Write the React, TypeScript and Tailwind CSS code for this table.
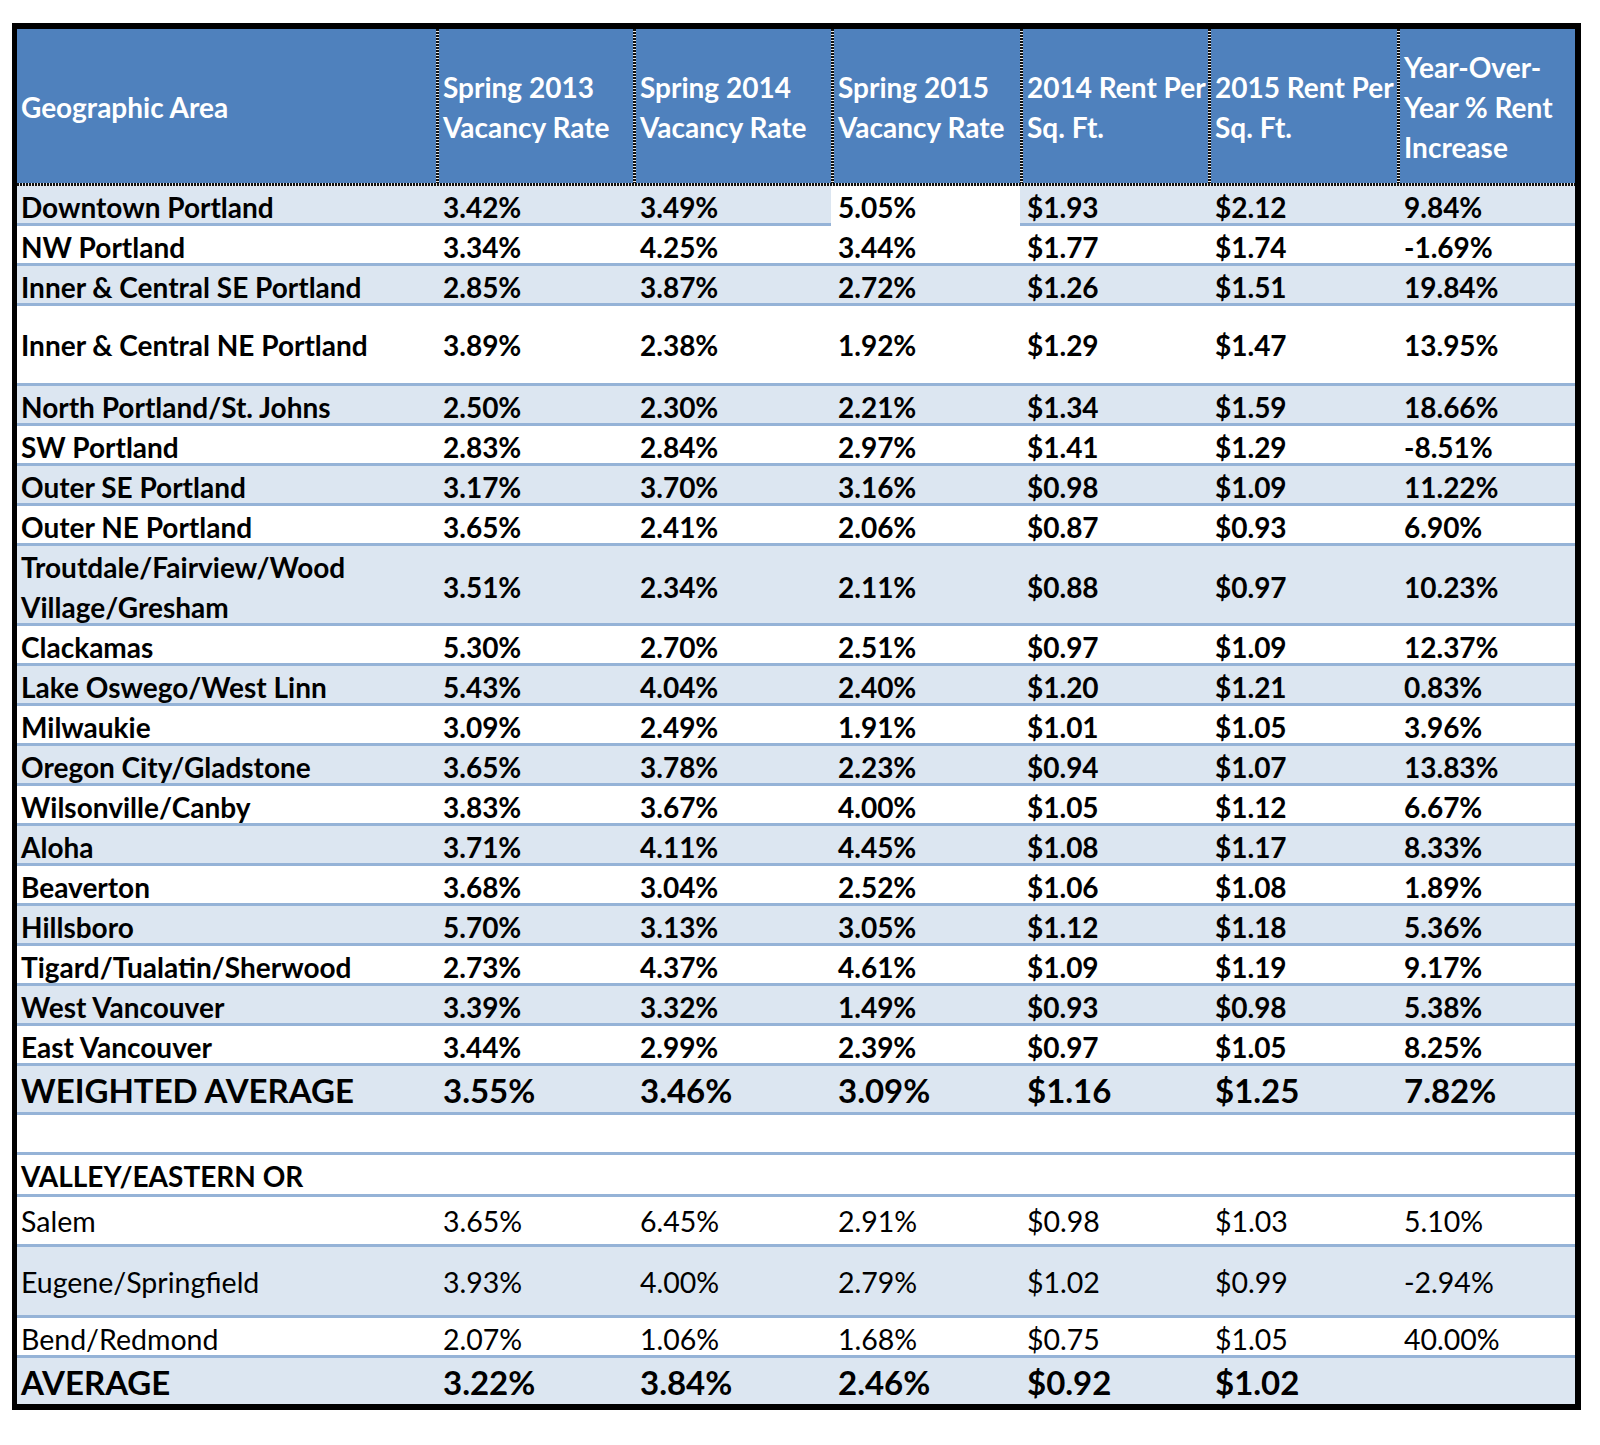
import React from "react";

type Row = {
  area: React.ReactNode;
  values: string[];
  band: boolean;
  height: string;
  big?: boolean;
  regular?: boolean;
  whiteCell?: number;
  last?: boolean;
};

const HEADS: string[][] = [
  ["Spring 2013", "Vacancy Rate"],
  ["Spring 2014", "Vacancy Rate"],
  ["Spring 2015", "Vacancy Rate"],
  ["2014 Rent Per", "Sq. Ft."],
  ["2015 Rent Per", "Sq. Ft."],
  ["Year-Over-", "Year % Rent", "Increase"],
];

const ROWS: Row[] = [
  { area: "Downtown Portland", values: ["3.42%", "3.49%", "5.05%", "$1.93", "$2.12", "9.84%"], band: true, height: "h-[40px]", whiteCell: 2 },
  { area: "NW Portland", values: ["3.34%", "4.25%", "3.44%", "$1.77", "$1.74", "-1.69%"], band: false, height: "h-[40px]" },
  { area: "Inner & Central SE Portland", values: ["2.85%", "3.87%", "2.72%", "$1.26", "$1.51", "19.84%"], band: true, height: "h-[40px]" },
  { area: "Inner & Central NE Portland", values: ["3.89%", "2.38%", "1.92%", "$1.29", "$1.47", "13.95%"], band: false, height: "h-[80px]" },
  { area: "North Portland/St. Johns", values: ["2.50%", "2.30%", "2.21%", "$1.34", "$1.59", "18.66%"], band: true, height: "h-[40px]" },
  { area: "SW Portland", values: ["2.83%", "2.84%", "2.97%", "$1.41", "$1.29", "-8.51%"], band: false, height: "h-[40px]" },
  { area: "Outer SE Portland", values: ["3.17%", "3.70%", "3.16%", "$0.98", "$1.09", "11.22%"], band: true, height: "h-[40px]" },
  { area: "Outer NE Portland", values: ["3.65%", "2.41%", "2.06%", "$0.87", "$0.93", "6.90%"], band: false, height: "h-[40px]" },
  {
    area: (
      <>
        Troutdale/Fairview/Wood
        <br />
        Village/Gresham
      </>
    ),
    values: ["3.51%", "2.34%", "2.11%", "$0.88", "$0.97", "10.23%"],
    band: true,
    height: "h-[80px]",
  },
  { area: "Clackamas", values: ["5.30%", "2.70%", "2.51%", "$0.97", "$1.09", "12.37%"], band: false, height: "h-[40px]" },
  { area: "Lake Oswego/West Linn", values: ["5.43%", "4.04%", "2.40%", "$1.20", "$1.21", "0.83%"], band: true, height: "h-[40px]" },
  { area: "Milwaukie", values: ["3.09%", "2.49%", "1.91%", "$1.01", "$1.05", "3.96%"], band: false, height: "h-[40px]" },
  { area: "Oregon City/Gladstone", values: ["3.65%", "3.78%", "2.23%", "$0.94", "$1.07", "13.83%"], band: true, height: "h-[40px]" },
  { area: "Wilsonville/Canby", values: ["3.83%", "3.67%", "4.00%", "$1.05", "$1.12", "6.67%"], band: false, height: "h-[40px]" },
  { area: "Aloha", values: ["3.71%", "4.11%", "4.45%", "$1.08", "$1.17", "8.33%"], band: true, height: "h-[40px]" },
  { area: "Beaverton", values: ["3.68%", "3.04%", "2.52%", "$1.06", "$1.08", "1.89%"], band: false, height: "h-[40px]" },
  { area: "Hillsboro", values: ["5.70%", "3.13%", "3.05%", "$1.12", "$1.18", "5.36%"], band: true, height: "h-[40px]" },
  { area: "Tigard/Tualatin/Sherwood", values: ["2.73%", "4.37%", "4.61%", "$1.09", "$1.19", "9.17%"], band: false, height: "h-[40px]" },
  { area: "West Vancouver", values: ["3.39%", "3.32%", "1.49%", "$0.93", "$0.98", "5.38%"], band: true, height: "h-[40px]" },
  { area: "East Vancouver", values: ["3.44%", "2.99%", "2.39%", "$0.97", "$1.05", "8.25%"], band: false, height: "h-[40px]" },
  { area: "WEIGHTED AVERAGE", values: ["3.55%", "3.46%", "3.09%", "$1.16", "$1.25", "7.82%"], band: true, height: "h-[49px]", big: true },
  { area: "", values: ["", "", "", "", "", ""], band: false, height: "h-[40px]" },
  { area: "VALLEY/EASTERN OR", values: ["", "", "", "", "", ""], band: false, height: "h-[42px]" },
  { area: "Salem", values: ["3.65%", "6.45%", "2.91%", "$0.98", "$1.03", "5.10%"], band: false, height: "h-[50px]", regular: true },
  { area: "Eugene/Springfield", values: ["3.93%", "4.00%", "2.79%", "$1.02", "$0.99", "-2.94%"], band: true, height: "h-[71px]", regular: true },
  { area: "Bend/Redmond", values: ["2.07%", "1.06%", "1.68%", "$0.75", "$1.05", "40.00%"], band: false, height: "h-[40px]", regular: true },
  { area: "AVERAGE", values: ["3.22%", "3.84%", "2.46%", "$0.92", "$1.02", ""], band: true, height: "h-[46px]", big: true, last: true },
];

function HeaderRow() {
  return (
    <>
      <div className="grid h-[154px] grid-cols-[419px_197px_198px_189px_188px_189px_178px] bg-[#4F81BD] text-[28px] font-bold leading-[40px] text-white">
        <div className="flex items-center pl-[4px] pt-[2px]">Geographic Area</div>
        {HEADS.map((lines, i) => (
          <div key={i} className="flex">
            <div className="w-[3px] shrink-0 bg-[repeating-linear-gradient(180deg,#111_0px,#111_2px,#e8e8e8_2px,#e8e8e8_3px)]" />
            <div className="flex flex-col justify-center whitespace-nowrap pl-[4px] pt-[2px]">
              {lines.map((l) => (
                <span key={l}>{l}</span>
              ))}
            </div>
          </div>
        ))}
      </div>
      <div className="h-[3px] bg-[repeating-linear-gradient(90deg,#111_0px,#111_2px,#e8e8e8_2px,#e8e8e8_3px)]" />
    </>
  );
}

function DataRow({ row }: { row: Row }) {
  return (
    <div
      className={[
        "grid grid-cols-[419px_197px_198px_189px_188px_189px_178px]",
        row.height,
        row.band ? "bg-[#DCE6F1]" : "bg-white",
        row.last ? "" : "border-b-[3px] border-[#95B3D7]",
        row.big ? "text-[33px]" : row.regular ? "text-[28.5px]" : "text-[28px]",
        row.regular ? "font-normal" : "font-bold",
        "leading-[40px]",
      ].join(" ")}
    >
      <div className="flex items-center whitespace-nowrap pl-[4px] pt-[1px]">
        <span>{row.area}</span>
      </div>
      {row.values.map((v, i) => (
        <div
          key={i}
          className={`flex items-center whitespace-nowrap pl-[7px] pt-[1px] ${row.whiteCell === i ? "bg-white" : ""}`}
        >
          {v}
        </div>
      ))}
    </div>
  );
}

export default function App() {
  return (
    <div className="min-h-[1445px] bg-white pl-[12px] pt-[23px] font-['Lato',sans-serif] text-black">
      <div className="w-[1569px] border-b-[6px] border-l-[5px] border-r-[6px] border-t-[6px] border-black">
        <HeaderRow />
        {ROWS.map((row, i) => (
          <DataRow key={i} row={row} />
        ))}
      </div>
    </div>
  );
}
